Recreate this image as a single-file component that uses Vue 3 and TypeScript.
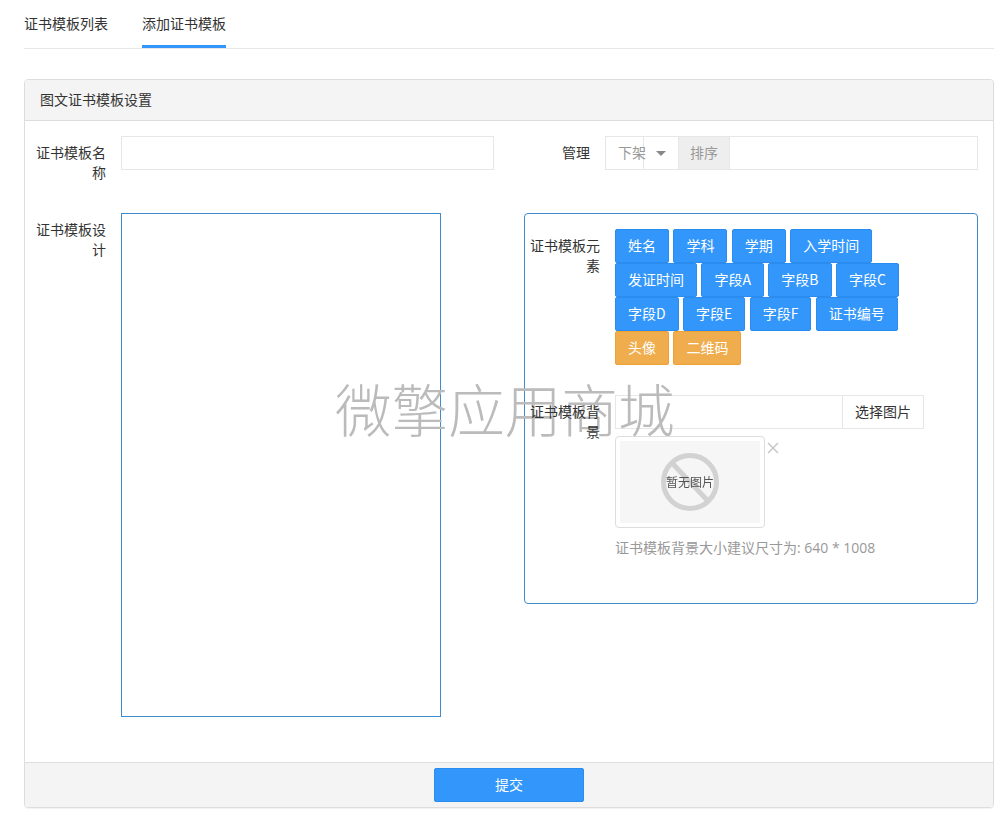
<script setup lang="ts">
const tabs = [
  { name: '证书模板列表', active: false },
  { name: '添加证书模板', active: true },
]

const elements = [
  { name: '姓名' },
  { name: '学科' },
  { name: '学期' },
  { name: '入学时间' },
  { name: '发证时间' },
  { name: '字段A' },
  { name: '字段B' },
  { name: '字段C' },
  { name: '字段D' },
  { name: '字段E' },
  { name: '字段F' },
  { name: '证书编号' },
  { name: '头像', warn: true },
  { name: '二维码', warn: true },
]
</script>

<template>
  <div class="page">
    <ul class="tabs">
      <li v-for="tab in tabs" :key="tab.name" class="tab" :class="{ active: tab.active }">{{ tab.name }}</li>
    </ul>

    <div class="panel">
      <div class="panel-heading">图文证书模板设置</div>
      <div class="panel-body">
        <div class="field">
          <label class="label">证书模板名称</label>
          <input class="input name-input" type="text" />
        </div>
        <div class="field">
          <label class="label manage-label">管理</label>
          <div class="manage">
            <div class="select">
              <span class="select-text">下架</span>
              <span class="caret"></span>
            </div>
            <span class="addon">排序</span>
            <input class="manage-input" type="text" />
          </div>
        </div>

        <div class="field design-field">
          <label class="label">证书模板设计</label>
          <div class="design"></div>
        </div>
        <div class="elements-box">
          <div class="box-row">
            <label class="label box-label">证书模板元素</label>
            <div class="controls buttons">
              <button
                v-for="el in elements"
                :key="el.name"
                type="button"
                class="btn"
                :class="{ warn: el.warn }"
              >
                {{ el.name }}
              </button>
            </div>
          </div>
          <div class="box-row bg-row">
            <label class="label box-label">证书模板背景</label>
            <div class="controls">
              <div class="input-group">
                <input class="input group-input" type="text" />
                <button type="button" class="pick">选择图片</button>
              </div>
              <div class="preview">
                <div class="thumb">
                  <div class="no-image">
                    <svg width="140" height="82" viewBox="0 0 140 82">
                      <circle cx="70" cy="41" r="26.5" fill="none" stroke="#d2d2d2" stroke-width="5" />
                      <path d="M52 22 L88 60" stroke="#d2d2d2" stroke-width="5" />
                    </svg>
                    <span class="no-image-text">暂无图片</span>
                  </div>
                </div>
                <svg class="close" width="12" height="12" viewBox="0 0 12 12">
                  <path d="M1 1 L11 11 M11 1 L1 11" stroke="#c4c4c4" stroke-width="1.4" />
                </svg>
              </div>
              <p class="help">证书模板背景大小建议尺寸为: 640 * 1008</p>
            </div>
          </div>
        </div>
      </div>
      <div class="panel-footer">
        <button type="button" class="btn submit">提交</button>
      </div>
    </div>

    <div class="watermark">微擎应用商城</div>
  </div>
</template>

<style>
body {
  background: #fff;
}
</style>

<style scoped>
.page {
  position: relative;
  padding: 0 12px 12px 24px;
  font-family: "Noto Sans CJK SC", "Liberation Sans", sans-serif;
  font-size: 14px;
  line-height: 20px;
  color: #333;
}

.tabs {
  display: flex;
  gap: 34px;
  margin: 0;
  padding: 0;
  list-style: none;
  border-bottom: 1px solid #e7e7eb;
}

.tab {
  padding: 13px 0 12px;
  border-bottom: 3px solid transparent;
}

.tab.active {
  border-bottom-color: #3296fa;
}

.panel {
  margin-top: 30px;
  border: 1px solid #ddd;
  border-radius: 4px;
  box-shadow: 0 1px 1px rgba(0, 0, 0, 0.05);
}

.panel-heading {
  height: 41px;
  padding: 9px 15px 11px;
  box-sizing: border-box;
  background: #f4f4f4;
  border-bottom: 1px solid #ddd;
  border-radius: 3px 3px 0 0;
}

.panel-body {
  display: grid;
  grid-template-columns: 469px 484px;
  align-items: start;
  padding: 15px 15px 15px 0;
}

.field {
  display: flex;
  align-items: flex-start;
  margin-bottom: 30px;
}

.label {
  position: relative;
  z-index: 1;
  flex: none;
  width: 72px;
  padding: 6px 15px 1px 9px;
  text-align: right;
}

.manage-label {
  width: 87px;
}

.input {
  height: 34px;
  padding: 6px 12px;
  box-sizing: border-box;
  border: 1px solid #e7e7eb;
  outline: none;
  background: #fff;
}

.name-input {
  width: 373px;
}

.manage {
  display: flex;
  flex: 1;
  height: 34px;
  box-sizing: border-box;
  border: 1px solid #e7e7eb;
}

.select {
  position: relative;
  display: flex;
  align-items: center;
  width: 72px;
  padding: 0 0 2px 12px;
  box-sizing: border-box;
  color: #999;
}

.select::before {
  content: "";
  position: absolute;
  top: 0;
  bottom: 0;
  left: 37px;
  width: 1px;
  background: #e7e7eb;
}

.select-text {
  position: relative;
}

.caret {
  position: absolute;
  left: 50px;
  top: 14px;
  border-left: 5px solid transparent;
  border-right: 5px solid transparent;
  border-top: 5px solid #888;
}

.addon {
  width: 50px;
  height: 32px;
  line-height: 30px;
  text-align: center;
  background: #eee;
  border-left: 1px solid #e7e7eb;
  border-right: 1px solid #e7e7eb;
  color: #999;
}

.manage-input {
  flex: 1;
  min-width: 0;
  border: none;
  outline: none;
}

.design-field {
  margin-bottom: 30px;
}

.design {
  width: 320px;
  height: 504px;
  box-sizing: border-box;
  border: 1px solid #428bca;
}

.elements-box {
  margin-left: 30px;
  height: 391px;
  padding: 15px 0 0;
  box-sizing: border-box;
  border: 1px solid #428bca;
  border-radius: 4px;
}

.box-row {
  display: flex;
  align-items: flex-start;
}

.bg-row {
  margin-top: 30px;
}

.box-label {
  padding: 6px 15px 1px 3px;
}

.controls {
  width: 309px;
}

.buttons {
  display: flex;
  flex-wrap: wrap;
  column-gap: 4.4px;
}

.btn {
  height: 34px;
  padding: 5px 12px 7px;
  box-sizing: border-box;
  border: 1px solid #2b8cf0;
  border-radius: 2px;
  background: #3296fa;
  color: #fff;
  font: inherit;
  cursor: pointer;
}

.btn.warn {
  background: #f0ad4e;
  border-color: #eea236;
}

.input-group {
  display: flex;
  height: 34px;
}

.group-input {
  width: 227px;
  border-right: none;
}

.pick {
  flex: 1;
  padding: 0 0 2px;
  border: 1px solid #e7e7eb;
  background: #fff;
  color: #333;
  font: inherit;
  cursor: pointer;
}

.preview {
  display: flex;
  align-items: flex-start;
  margin-top: 7px;
}

.thumb {
  width: 150px;
  height: 92px;
  padding: 4px;
  box-sizing: border-box;
  border: 1px solid #ddd;
  border-radius: 4px;
}

.no-image {
  position: relative;
  display: flex;
  align-items: center;
  justify-content: center;
  height: 82px;
  background: #f6f6f6;
}

.no-image-text {
  position: absolute;
  font-size: 12px;
  color: #555;
  filter: blur(0.3px);
}

.close {
  margin: 6px 0 0 2px;
}

.help {
  margin: 10px 0 0;
  color: #999;
  font-family: "Open Sans", "Noto Sans CJK SC", sans-serif;
}

.panel-footer {
  display: flex;
  justify-content: center;
  padding: 5px 0;
  background: #f4f4f4;
  border-top: 1px solid #ddd;
  border-radius: 0 0 3px 3px;
}

.submit {
  width: 150px;
}

.watermark {
  position: absolute;
  top: 367px;
  left: 335px;
  font-size: 56.6px;
  line-height: 80px;
  font-weight: 300;
  color: #bbb;
  white-space: nowrap;
  pointer-events: none;
}
</style>
